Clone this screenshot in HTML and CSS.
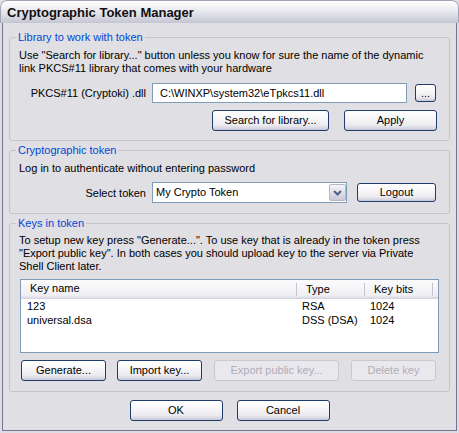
FILE: index.html
```html
<!DOCTYPE html>
<html>
<head>
<meta charset="utf-8">
<link rel="stylesheet" href="styles.css">
</head>
<body>
<div class="window">
  <div class="titlebar"><span class="title">Cryptographic Token Manager</span></div>
  <div class="client">
    <fieldset class="group g1">
      <legend>Library to work with token</legend>
      <p class="note">Use "Search for library..." button unless you know for sure the name of the dynamic<br>link PKCS#11 library that comes with your hardware</p>
      <div class="field-row r-lib">
        <label class="lbl">PKCS#11 (Cryptoki) .dll</label>
        <div class="textbox lib-path">C:\WINXP\system32\eTpkcs11.dll</div>
        <button class="btn btn-browse">...</button>
      </div>
      <div class="btn-row r-libbtn">
        <button class="btn btn-search">Search for library...</button>
        <button class="btn btn-apply">Apply</button>
      </div>
    </fieldset>

    <fieldset class="group g2">
      <legend>Cryptographic token</legend>
      <p class="note">Log in to authenticate without entering password</p>
      <div class="field-row r-token">
        <label class="lbl">Select token</label>
        <div class="combo">
          <span class="combo-text">My Crypto Token</span>
          <span class="combo-btn"><svg width="9" height="6" viewBox="0 0 9 6"><path d="M1 1 L4.5 4.5 L8 1" fill="none" stroke="#4d6185" stroke-width="2"/></svg></span>
        </div>
        <button class="btn btn-logout">Logout</button>
      </div>
    </fieldset>

    <fieldset class="group g3">
      <legend>Keys in token</legend>
      <p class="note n3">To setup new key press "Generate...". To use key that is already in the token press<br>"Export public key". In both cases you should upload key to the server via Private<br>Shell Client later.</p>
      <div class="listview">
        <div class="lv-header">
          <div class="lv-col c-name">Key name</div>
          <div class="lv-col c-type">Type</div>
          <div class="lv-col c-bits">Key bits</div>
          <div class="lv-col c-rest"></div>
        </div>
        <div class="lv-row">
          <div class="lv-cell">123</div>
          <div class="lv-cell">RSA</div>
          <div class="lv-cell">1024</div>
          <div class="lv-cell"></div>
        </div>
        <div class="lv-row">
          <div class="lv-cell">universal.dsa</div>
          <div class="lv-cell">DSS (DSA)</div>
          <div class="lv-cell">1024</div>
          <div class="lv-cell"></div>
        </div>
      </div>
      <div class="btn-row r-keys">
        <button class="btn btn-gen">Generate...</button>
        <button class="btn btn-import">Import key...</button>
        <button class="btn btn-export" disabled>Export public key...</button>
        <button class="btn btn-delete" disabled>Delete key</button>
      </div>
    </fieldset>

    <div class="dialog-buttons">
      <button class="btn btn-ok">OK</button>
      <button class="btn btn-cancel">Cancel</button>
    </div>
  </div>
</div>
</body>
</html>
```

FILE: styles.css
```css
html, body {
  margin: 0;
  padding: 0;
  background: #e0dfe3;
}
body {
  font-family: "Liberation Sans", Arial, sans-serif;
  font-size: 11px;
  color: #000;
}
.window {
  width: 459px;
  height: 433px;
  box-sizing: border-box;
  background: #dedde6;
  display: flex;
  flex-direction: column;
  border-radius: 7px 7px 0 0;
  overflow: hidden;
}
.titlebar {
  height: 23px;
  flex: none;
  box-sizing: border-box;
  border: 1px solid #a3a3b6;
  border-bottom: none;
  border-radius: 7px 7px 0 0;
  background: linear-gradient(to bottom, #ffffff 0%, #f4f4f7 25%, #e3e3ea 55%, #cfcfdc 85%, #c4c4d3 100%);
  display: flex;
  align-items: center;
  padding-left: 6px;
}
.title {
  font-family: "Liberation Sans", Arial, sans-serif;
  font-weight: bold;
  font-size: 13px;
  color: #101010;
  padding-top: 1px;
}
.client {
  flex: 1;
  margin: 0 2px 2px 2px;
  border: 1px solid #75758f;
  border-top: none;
  background: #e0dfe3;
  display: flex;
  flex-direction: column;
}
.group {
  margin: 0 6px;
  padding: 0 12px 9px 9px;
  border: 1px solid #c5c4ce;
  border-radius: 3px;
  min-width: 0;
}
.g1 { margin-top: 8px; }
.g2 { margin-top: 3px; padding-bottom: 10px; }
.g3 { margin-top: 3px; padding-bottom: 10px; }
.group legend {
  color: #0046d5;
  line-height: 13px;
  padding: 0 2px;
  margin-left: -3px;
}
.note {
  margin: 5px 0 0 0;
  line-height: 13px;
  white-space: nowrap;
}
.n3 { margin-top: 4px; }
.field-row {
  display: flex;
  align-items: center;
}
.lbl {
  width: 127px;
  margin-right: 6px;
  text-align: right;
  flex: none;
}
.r-lib { margin-top: 8px; }
.textbox {
  height: 20px;
  box-sizing: border-box;
  border: 1px solid #7f9db9;
  background: #fff;
  line-height: 18px;
  padding-left: 7px;
}
.lib-path { width: 255px; }
.btn {
  font-family: inherit;
  font-size: 11px;
  color: #000;
  height: 21px;
  box-sizing: border-box;
  border: 1px solid #1f3c6a;
  border-radius: 3px;
  background: linear-gradient(to bottom, #ffffff 0%, #f7f7f9 40%, #ebebf0 75%, #d5d4e0 92%, #c4c3d4 100%);
  padding: 0;
  margin: 0;
  line-height: 19px;
  flex: none;
}
.btn:disabled {
  border-color: #c9c9d2;
  background: #e9e8ed;
  color: #aeadb8;
}
.btn-browse {
  width: 21px;
  height: 18px;
  line-height: 14px;
  margin-left: 8px;
}
.btn-row {
  display: flex;
  justify-content: flex-end;
}
.r-libbtn { margin-top: 7px; }
.btn-search { width: 117px; }
.btn-apply { width: 93px; margin-left: 15px; }
.r-token { margin-top: 7px; }
.combo {
  width: 195px;
  height: 21px;
  box-sizing: border-box;
  border: 1px solid #7f9db9;
  background: #fff;
  display: flex;
  align-items: stretch;
}
.combo-text {
  flex: 1;
  line-height: 19px;
  padding-left: 3px;
}
.combo-btn {
  width: 17px;
  margin: 1px 0 1px 0;
  box-sizing: border-box;
  border: 1px solid #b7b7c8;
  border-radius: 2px;
  background: linear-gradient(to bottom, #f4f4f8 0%, #dcdce6 60%, #c9c9d8 100%);
  display: flex;
  align-items: center;
  justify-content: center;
}
.btn-logout {
  width: 79px;
  height: 19px;
  line-height: 17px;
  margin-left: 10px;
}
.listview {
  margin: 6px -2px 0 1px;
  height: 74px;
  box-sizing: border-box;
  border: 1px solid #7f9db9;
  background: #fff;
}
.lv-header, .lv-row {
  display: grid;
  grid-template-columns: 275px 68px 68px 1fr;
}
.lv-header {
  height: 19px;
  background: linear-gradient(to bottom, #fbfbfc 0%, #f0f0f4 80%, #e3e2ea 90%, #d2d1dc 100%);
}
.lv-col {
  line-height: 17px;
  padding-left: 9px;
}
.lv-col.c-type, .lv-col.c-bits, .lv-col.c-rest {
  border-left: 1px solid #c5c5d2;
  margin-top: 3px;
  line-height: 12px;
  height: 13px;
}
.lv-row { height: 14px; line-height: 14px; }
.lv-row:first-of-type { margin-top: 1px; }
.lv-cell { padding-left: 6px; white-space: nowrap; }
.r-keys {
  margin-top: 7px;
  justify-content: flex-start;
  padding-left: 2px;
}
.btn-gen { width: 85px; }
.btn-import { width: 85px; margin-left: 11px; }
.btn-export { width: 125px; margin-left: 12px; }
.btn-delete { width: 85px; margin-left: 12px; }
.dialog-buttons {
  margin-top: 8px;
  display: flex;
  justify-content: center;
  gap: 14px;
}
.btn-ok, .btn-cancel { width: 93px; }
```
